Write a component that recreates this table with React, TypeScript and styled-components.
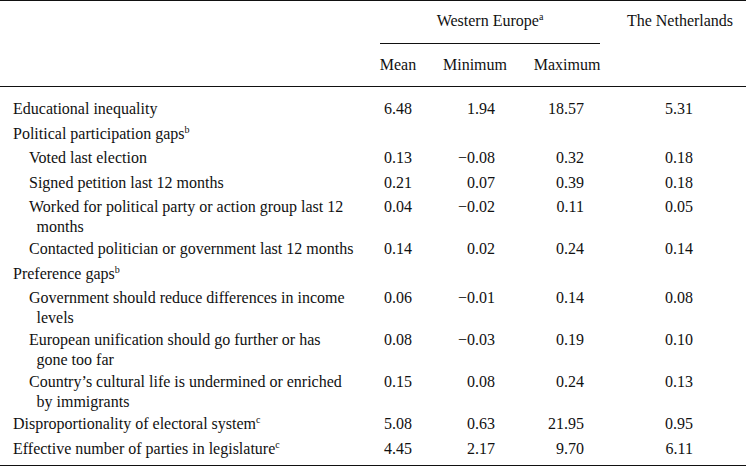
import styled, { createGlobalStyle } from 'styled-components';

const GlobalStyle = createGlobalStyle`
  html, body {
    margin: 0;
    padding: 0;
    background: #ffffff;
  }
  body {
    color: #111111;
  }
`;

const FONT = `"Liberation Serif", "Tinos", "Times New Roman", Times, serif`;

// label | Mean | Minimum | Maximum | The Netherlands
const COLS = '372px 52px 102px 82px 138px';
const NUM_PAD = [12, 31, 24, 53];

const Table = styled.div`
  width: 746px;
  font-family: ${FONT};
  font-size: 16px;
  line-height: 20px;
  border-top: 1px solid #111;
  border-bottom: 1px solid #111;
`;

const Head = styled.div`
  border-bottom: 1px solid #111;
`;

const HeadRow = styled.div<{ $sub?: boolean }>`
  display: grid;
  grid-template-columns: ${COLS};
  padding-top: ${(p) => (p.$sub ? '11px' : '10px')};
`;

const GroupHead = styled.div`
  grid-column: 2 / 5;
  margin: 0 8px;
  padding-bottom: 12px;
  border-bottom: 1px solid #111;
  text-align: center;
`;

const ColHead = styled.div<{ $shift?: number }>`
  text-align: center;
  padding-left: ${(p) => (p.$shift ? p.$shift * 2 : 0)}px;
  padding-bottom: 11px;
`;

const Sup = styled.sup`
  font-size: 10px;
  line-height: 0;
  vertical-align: 6px;
`;

const Body = styled.div`
  padding: 10px 0 4px;
`;

const Row = styled.div<{ $wrapped?: boolean }>`
  display: grid;
  grid-template-columns: ${COLS};
  padding-top: 2px;
  padding-bottom: ${(p) => (p.$wrapped ? '0' : '2.5px')};
`;

const Label = styled.div<{ $sub?: boolean }>`
  padding-left: ${(p) => (p.$sub ? '36.5px' : '13px')};
  text-indent: ${(p) => (p.$sub ? '-7.5px' : '0')};
  white-space: nowrap;
`;

const Num = styled.div<{ $pad: number }>`
  text-align: right;
  padding-right: ${(p) => p.$pad}px;
`;

type Line = {
  label: string[];
  sup?: string;
  sub?: boolean;
  vals?: string[];
};

const rows: Line[] = [
  { label: ['Educational inequality'], vals: ['6.48', '1.94', '18.57', '5.31'] },
  { label: ['Political participation gaps'], sup: 'b' },
  { label: ['Voted last election'], sub: true, vals: ['0.13', '\u22120.08', '0.32', '0.18'] },
  { label: ['Signed petition last 12 months'], sub: true, vals: ['0.21', '0.07', '0.39', '0.18'] },
  {
    label: ['Worked for political party or action group last 12', 'months'],
    sub: true,
    vals: ['0.04', '\u22120.02', '0.11', '0.05'],
  },
  {
    label: ['Contacted politician or government last 12 months'],
    sub: true,
    vals: ['0.14', '0.02', '0.24', '0.14'],
  },
  { label: ['Preference gaps'], sup: 'b' },
  {
    label: ['Government should reduce differences in income', 'levels'],
    sub: true,
    vals: ['0.06', '\u22120.01', '0.14', '0.08'],
  },
  {
    label: ['European unification should go further or has', 'gone too far'],
    sub: true,
    vals: ['0.08', '\u22120.03', '0.19', '0.10'],
  },
  {
    label: ['Country\u2019s cultural life is undermined or enriched', 'by immigrants'],
    sub: true,
    vals: ['0.15', '0.08', '0.24', '0.13'],
  },
  { label: ['Disproportionality of electoral system'], sup: 'c', vals: ['5.08', '0.63', '21.95', '0.95'] },
  { label: ['Effective number of parties in legislature'], sup: 'c', vals: ['4.45', '2.17', '9.70', '6.11'] },
];

export default function App() {
  return (
    <>
      <GlobalStyle />
      <Table>
        <Head>
          <HeadRow>
            <div />
            <GroupHead>
              Western Europe<Sup>a</Sup>
            </GroupHead>
            <ColHead $shift={3}>The Netherlands</ColHead>
          </HeadRow>
          <HeadRow $sub>
            <div />
            <ColHead>Mean</ColHead>
            <ColHead>Minimum</ColHead>
            <ColHead>Maximum</ColHead>
            <div />
          </HeadRow>
        </Head>
        <Body>
          {rows.map((r) => (
            <Row key={r.label[0]} $wrapped={r.label.length > 1}>
              <Label $sub={r.sub}>
                {r.label.map((part, i) => (
                  <span key={i}>
                    {i > 0 && <br />}
                    {part}
                  </span>
                ))}
                {r.sup && <Sup>{r.sup}</Sup>}
              </Label>
              {(r.vals ?? ['', '', '', '']).map((v, i) => (
                <Num key={i} $pad={NUM_PAD[i]}>
                  {v}
                </Num>
              ))}
            </Row>
          ))}
        </Body>
      </Table>
    </>
  );
}
